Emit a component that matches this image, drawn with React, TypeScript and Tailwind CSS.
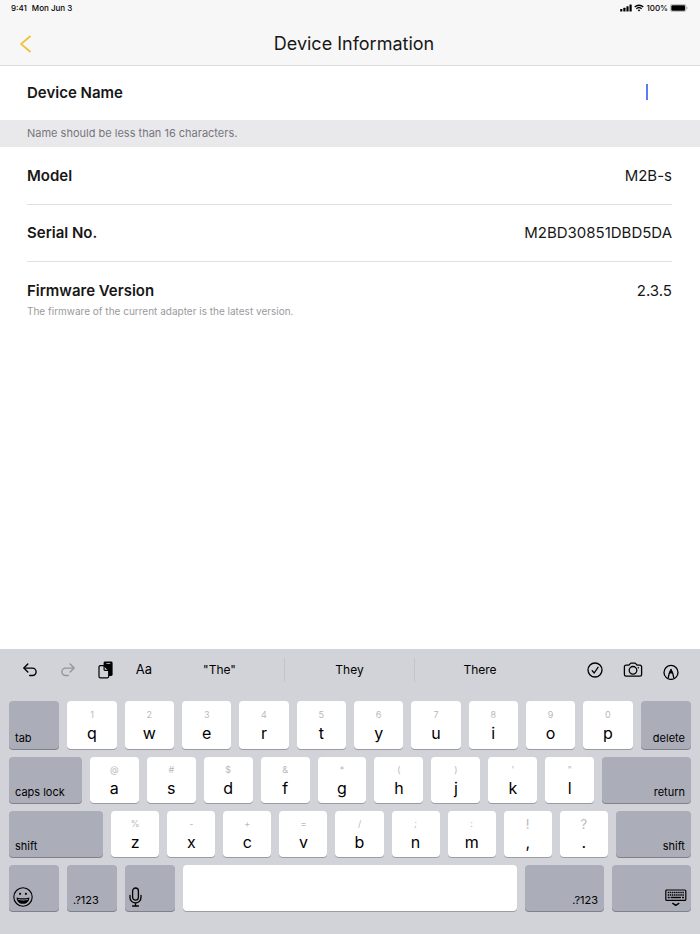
import React, { useState } from 'react';

interface KeyDef {
  main: string;
  alt: string;
}

const toKeys = (letters: string, symbols: string): KeyDef[] =>
  letters.split('').map((main, i) => ({ main, alt: symbols[i] }));

const TOP_ROW = toKeys('qwertyuiop', '1234567890');
const HOME_ROW = toKeys('asdfghjkl', '@#$&*()\'"');
const BOTTOM_ROW = toKeys('zxcvbnm', '%-+=/;:');
const PUNCTUATION = toKeys(',.', '!?');

const SUGGESTIONS = ['"The"', 'They', 'There'];

const StatusBar: React.FC = () => (
  <div className="flex items-center justify-between h-4 pl-[11px] pr-3 text-[8px] font-medium">
    <div className="flex gap-[5px]">
      <span>9:41</span>
      <span>Mon Jun 3</span>
    </div>
    <div className="flex items-center gap-[2px]">
      <svg width="12" height="8" viewBox="0 0 12 8" fill="currentColor">
        <rect x="0.2" y="5" width="2.2" height="2.5" rx="0.5" />
        <rect x="3.3" y="3.8" width="2.2" height="3.7" rx="0.5" />
        <rect x="6.4" y="2.3" width="2.2" height="5.2" rx="0.5" />
        <rect x="9.5" y="0.5" width="2.2" height="7" rx="0.5" />
      </svg>
      <svg width="10" height="8" viewBox="0 0 10 8" fill="none" stroke="currentColor" strokeWidth="1.3">
        <path d="M0.7 3a6.2 6.2 0 0 1 8.6 0" />
        <path d="M2.3 4.8a3.9 3.9 0 0 1 5.4 0" />
        <path d="M3.6 6.1a2 2 0 0 1 2.8 0L5 7.5z" fill="currentColor" stroke="none" />
      </svg>
      <span>100%</span>
      <svg width="18" height="8" viewBox="0 0 18 8">
        <rect x="0.4" y="0.4" width="15.6" height="7.2" rx="2" fill="none" stroke="#a0a0a0" strokeWidth="0.7" />
        <rect x="1.3" y="1.2" width="13.8" height="5.6" rx="1.2" fill="#000" />
        <path d="M16.7 2.8v2.4q0.9-0.3 0.9-1.2t-0.9-1.2z" fill="#a0a0a0" />
      </svg>
    </div>
  </div>
);

const UndoIcon: React.FC = () => (
  <svg width="14" height="14" viewBox="0 0 14 14" fill="none" stroke="currentColor" strokeWidth="1.4" strokeLinecap="round" strokeLinejoin="round">
    <path d="M4.8 1.1L0.9 5.1l3.9 4" />
    <path d="M1.2 5.1h8.2a3.7 3.7 0 0 1 0 7.4H6.7" />
  </svg>
);

const PasteIcon: React.FC = () => (
  <svg width="16" height="18" viewBox="0 0 16 18">
    <rect x="5.6" y="0.6" width="9" height="14.4" rx="1.4" fill="#000" />
    <rect x="8.2" y="2" width="4.2" height="0.8" rx="0.4" fill="#d1d3d8" />
    <path
      d="M2.2 4.7h3.9l4.6 4.6v6.3a1.2 1.2 0 0 1-1.2 1.2H2.2A1.2 1.2 0 0 1 1 15.6V5.9a1.2 1.2 0 0 1 1.2-1.2z"
      fill="#d1d3d8"
      stroke="#000"
      strokeWidth="1.2"
    />
    <path d="M6.1 4.9v3.6a0.8 0.8 0 0 0 0.8 0.8h3.6" fill="none" stroke="#000" strokeWidth="1.2" />
  </svg>
);

const CheckIcon: React.FC = () => (
  <svg width="16" height="16" viewBox="0 0 16 16" fill="none" stroke="currentColor" strokeWidth="1.3" strokeLinecap="round" strokeLinejoin="round">
    <circle cx="8" cy="8" r="7" />
    <path d="M5.2 8.6l2 2.4L11 5.3" />
  </svg>
);

const CameraIcon: React.FC = () => (
  <svg width="20" height="16" viewBox="0 0 20 16" fill="none" stroke="currentColor" strokeWidth="1.3" strokeLinejoin="round">
    <path d="M3 3.2h2.3c0.5 0 0.8-0.2 1.1-0.6l0.8-1c0.3-0.4 0.6-0.5 1-0.5h3.6c0.4 0 0.7 0.1 1 0.5l0.8 1c0.3 0.4 0.6 0.6 1.1 0.6H17a1.6 1.6 0 0 1 1.6 1.6v7.8a1.6 1.6 0 0 1-1.6 1.6H3a1.6 1.6 0 0 1-1.6-1.6V4.8A1.6 1.6 0 0 1 3 3.2z" />
    <circle cx="10" cy="8.3" r="3.8" />
    <circle cx="15.3" cy="5.7" r="0.8" fill="currentColor" stroke="none" />
  </svg>
);

const MarkupIcon: React.FC = () => (
  <svg width="16" height="20" viewBox="0 0 16 20" fill="none" stroke="currentColor" strokeWidth="1.3">
    <circle cx="8" cy="12.4" r="7" />
    <path d="M5.1 18.4L6.3 13.2L8 9.6l1.7 3.6 1.2 5.2" strokeLinejoin="round" />
    <path d="M8 8.4l2.1 5H5.9z" fill="currentColor" stroke="none" />
  </svg>
);

const SmileIcon: React.FC = () => (
  <svg width="20" height="20" viewBox="0 0 20 20" fill="none" stroke="currentColor" strokeWidth="1.1">
    <circle cx="10" cy="10" r="9.2" />
    <circle cx="7.1" cy="6.8" r="1.1" fill="currentColor" stroke="none" />
    <circle cx="12.9" cy="6.8" r="1.1" fill="currentColor" stroke="none" />
    <path d="M3.6 10.4q6.4 1.7 12.8 0c0 3.8-2.6 6.4-6.4 6.4s-6.4-2.6-6.4-6.4z" fill="currentColor" stroke="none" />
    <path d="M4.9 11.9q5.1 1.1 10.2 0q-0.3 0.9-0.7 1.2q-4.4 0.7-8.8 0q-0.4-0.3-0.7-1.2z" fill="#abadb9" stroke="none" />
  </svg>
);

const MicIcon: React.FC = () => (
  <svg width="13" height="20" viewBox="0 0 13 20" fill="none" stroke="currentColor" strokeWidth="1.3" strokeLinecap="round">
    <rect x="3.6" y="1" width="5.8" height="12.2" rx="2.9" />
    <path d="M1 8.3v2.2a5.5 5.5 0 0 0 11 0V8.3M6.5 16v2.8M3.6 19h5.8" />
  </svg>
);

const HideKeyboardIcon: React.FC = () => (
  <svg width="22" height="18" viewBox="0 0 22 18" fill="none" stroke="currentColor">
    <rect x="0.8" y="1" width="20" height="10.4" rx="1" strokeWidth="1.2" />
    <path d="M2.7 3.6h16.4M2.7 6h16.4" strokeWidth="1.5" strokeDasharray="1.5 0.6" />
    <path d="M2.7 8.6h2M5.6 8.6H16M17 8.6h2" strokeWidth="1.5" />
    <path d="M7.8 14.4l3 1.9 3-1.9" strokeWidth="1.4" strokeLinecap="round" />
  </svg>
);

const InfoRow: React.FC<{ label: string; value: string; last?: boolean }> = ({ label, value, last }) => (
  <div
    className={`flex items-center justify-between text-[15px] text-neutral-900 ${
      last ? 'h-[58px]' : 'h-[57px] border-b border-[#e0e0e0]'
    }`}
  >
    <dt className="font-semibold">{label}</dt>
    <dd>{value}</dd>
  </div>
);

const LetterKey: React.FC<{ def: KeyDef; className: string; large?: boolean; onPress: (key: string) => void }> = ({
  def,
  className,
  large,
  onPress,
}) => (
  <button
    onClick={() => onPress(def.main)}
    className={`flex flex-col items-center justify-center basis-0 min-w-0 rounded-[4px] bg-white shadow-[0_1px_0_#9a9ca1] ${className}`}
  >
    <span className={`leading-4 text-[#b9b9bb] ${large ? 'text-[13px]' : 'text-[9px]'}`}>{def.alt}</span>
    <span className="text-[16px] leading-5">{def.main}</span>
  </button>
);

const ActionKey: React.FC<{
  label: string;
  className: string;
  right?: boolean;
  onPress?: () => void;
  children?: React.ReactNode;
}> = ({ label, className, right, onPress, children }) => (
  <button
    aria-label={label}
    onClick={onPress}
    className={`flex items-end basis-0 min-w-0 rounded-[4px] bg-[#abadb9] text-[11px] leading-4 whitespace-nowrap shadow-[0_1px_0_#7f818a] ${
      right ? 'justify-end' : 'justify-start'
    } ${className}`}
  >
    {children ? (
      <span className="px-1 pb-1">{children}</span>
    ) : (
      <span className="px-[6px] pb-[3px]">{label}</span>
    )}
  </button>
);

const App: React.FC = () => {
  const [name, setName] = useState('');

  const press = (key: string) => setName((prev) => (prev + key).slice(0, 15));

  return (
    <div className="flex flex-col min-h-screen bg-white text-black font-['Inter','Liberation_Sans',sans-serif]">
      <header className="bg-[#f7f7f7] border-b border-[#dcdcdc]">
        <StatusBar />
        <div className="grid grid-cols-[1fr_auto_1fr] items-center h-[49px] pl-5 pr-3 pt-[6px]">
          <button aria-label="Back" className="justify-self-start">
            <svg width="12" height="18" viewBox="0 0 12 18" fill="none" stroke="#f2c03c" strokeWidth="1.8">
              <path d="M10.5 1L1 9l9.5 8" />
            </svg>
          </button>
          <h1 className="text-[18px] leading-6 text-neutral-900">Device Information</h1>
        </div>
      </header>

      <main>
        <div className="flex items-center h-[54px] pl-[27px] pr-[52px] text-[15px] text-neutral-900">
          <label htmlFor="device-name" className="font-semibold">
            Device Name
          </label>
          <input
            id="device-name"
            value={name}
            maxLength={15}
            onChange={(e) => setName(e.target.value)}
            className="flex-1 min-w-0 text-right outline-none caret-transparent"
          />
          <span className="w-[2px] h-4 mb-[2px] bg-[#5a7df0]" />
        </div>
        <p className="h-[27px] px-[27px] bg-[#e9e9eb] text-[11px] leading-[26px] text-[#77757f]">
          Name should be less than 16 characters.
        </p>

        <dl className="pl-[27px] pr-[28px] pt-px">
          <InfoRow label="Model" value="M2B-s" />
          <InfoRow label="Serial No." value="M2BD30851DBD5DA" />
          <InfoRow label="Firmware Version" value="2.3.5" last />
        </dl>
        <p className="-mt-[17px] px-[27px] text-[10px] leading-4 text-[#9a9a9c]">
          The firmware of the current adapter is the latest version.
        </p>
      </main>

      <section aria-label="Keyboard" className="mt-auto px-[9px] pb-[23px] bg-[#d1d3d8]">
        <div className="flex items-center h-[42px] mb-[10px] -mx-[9px] text-[12px]">
          <div className="flex w-[155px] pl-[11px]">
            <button aria-label="Undo" className="flex items-center justify-center w-[38px]">
              <UndoIcon />
            </button>
            <button aria-label="Redo" className="flex items-center justify-center w-[38px] text-[#94969a] -scale-x-100">
              <UndoIcon />
            </button>
            <button aria-label="Paste" className="flex items-center justify-center w-[38px]">
              <PasteIcon />
            </button>
            <button className="w-[30px] pr-[3px] text-right text-[13px]">Aa</button>
          </div>
          <div className="flex-1 grid grid-cols-3 divide-x divide-[#c2c4c8]">
            {SUGGESTIONS.map((word) => (
              <button key={word} onClick={() => press(word.replace(/"/g, ''))} className="h-6">
                {word}
              </button>
            ))}
          </div>
          <div className="flex justify-end w-[155px] pr-[10px]">
            <button aria-label="Done" className="flex items-center justify-center w-[38px]">
              <CheckIcon />
            </button>
            <button aria-label="Camera" className="flex items-center justify-center w-[38px]">
              <CameraIcon />
            </button>
            <button aria-label="Markup" className="flex items-center justify-center w-[38px]">
              <MarkupIcon />
            </button>
          </div>
        </div>

        <div className="flex flex-col gap-2">
          <div className="flex gap-2 h-12">
            <ActionKey label="tab" className="grow-[50]" />
            {TOP_ROW.map((k) => (
              <LetterKey key={k.main} def={k} className="grow-[49]" onPress={press} />
            ))}
            <ActionKey label="delete" className="grow-[50]" right onPress={() => setName(name.slice(0, -1))} />
          </div>

          <div className="flex gap-2 h-[46px]">
            <ActionKey label="caps lock" className="grow-[73]" />
            {HOME_ROW.map((k) => (
              <LetterKey key={k.main} def={k} className="grow-[49]" onPress={press} />
            ))}
            <ActionKey label="return" className="grow-[89]" right />
          </div>

          <div className="flex gap-2 h-[46px]">
            <ActionKey label="shift" className="grow-[94]" />
            {BOTTOM_ROW.map((k) => (
              <LetterKey key={k.main} def={k} className="grow-[48]" onPress={press} />
            ))}
            {PUNCTUATION.map((k) => (
              <LetterKey key={k.main} def={k} className="grow-[48]" large onPress={press} />
            ))}
            <ActionKey label="shift" className="grow-[75]" right />
          </div>

          <div className="flex gap-2 h-[46px]">
            <ActionKey label="Emoji" className="grow-[50]">
              <SmileIcon />
            </ActionKey>
            <ActionKey label=".?123" className="grow-[50]" />
            <ActionKey label="Dictate" className="grow-[50]">
              <MicIcon />
            </ActionKey>
            <button
              aria-label="space"
              onClick={() => press(' ')}
              className="grow-[334] basis-0 rounded-[4px] bg-white shadow-[0_1px_0_#9a9ca1]"
            />
            <ActionKey label=".?123" className="grow-[79]" right />
            <ActionKey label="Hide keyboard" className="grow-[79]" right>
              <HideKeyboardIcon />
            </ActionKey>
          </div>
        </div>
      </section>
    </div>
  );
};

export default App;
